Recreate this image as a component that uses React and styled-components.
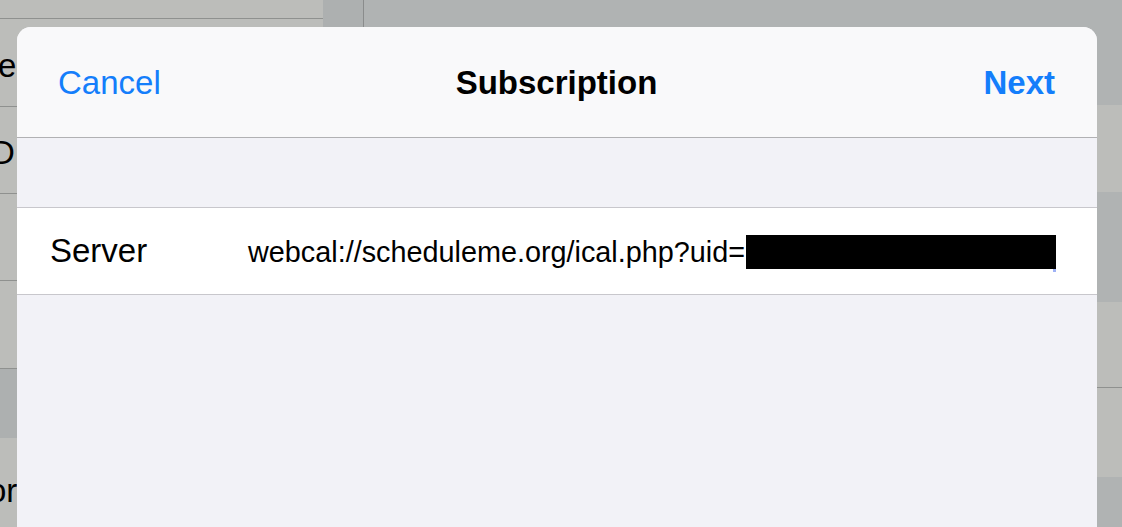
import React from "react";
import styled, { createGlobalStyle } from "styled-components";

const GlobalStyle = createGlobalStyle`
  html, body {
    margin: 0;
    padding: 0;
    background: #b0b3b3;
    font-family: "Liberation Sans", Arial, sans-serif;
    -webkit-font-smoothing: antialiased;
  }
`;

// rows of the dimmed list behind the sheet; only their tails show
const sidebarRows = [
  { height: 19, label: "" },
  { height: 88, label: "e", shift: -2 },
  { height: 87, label: "D", shift: -9 },
  { height: 87, label: "" },
  { height: 88, label: "" },
  { height: 69, label: "", selected: true },
  { height: 100, label: "or", shift: -12, last: true },
];

const detailCells = [
  { height: 105, cell: false },
  { height: 87, cell: true },
  { height: 110, cell: false },
  { height: 86, cell: true, line: true },
  { height: 89, cell: true },
  { height: 60, cell: false },
];

function App() {
  return (
    <>
      <GlobalStyle />
      <Screen>
        <Sidebar>
          {sidebarRows.map((row, i) => (
            <SideRow
              key={i}
              $height={row.height}
              $selected={row.selected}
              $last={row.last}
            >
              {row.label && <SideLabel $shift={row.shift}>{row.label}</SideLabel>}
            </SideRow>
          ))}
        </Sidebar>
        <Gutter />
        <Detail>
          {detailCells.map((c, i) => (
            <DetailCell key={i} $height={c.height} $cell={c.cell} $line={c.line} />
          ))}
        </Detail>

        <Sheet>
          <NavBar>
            <NavButton>Cancel</NavButton>
            <Title>Subscription</Title>
            <NavButton $bold>Next</NavButton>
          </NavBar>
          <GroupSpacer />
          <FieldRow>
            <FieldLabel>Server</FieldLabel>
            <FieldValue>
              webcal://scheduleme.org/ical.php?uid=
              <Redacted />
            </FieldValue>
          </FieldRow>
        </Sheet>
      </Screen>
    </>
  );
}

export default App;

const Screen = styled.div`
  position: relative;
  display: flex;
  width: 1122px;
  height: 527px;
  overflow: hidden;
  background: #b0b3b3;
`;

const Sidebar = styled.div`
  width: 323px;
  flex-shrink: 0;
  display: flex;
  flex-direction: column;
  background: #bcbdba;
  overflow: hidden;
`;

const SideRow = styled.div`
  height: ${(p) => p.$height}px;
  flex-shrink: 0;
  display: flex;
  align-items: center;
  background: ${(p) => (p.$selected ? "#adb0b0" : "transparent")};
  border-bottom: ${(p) => (p.$selected || p.$last ? "none" : "1px solid #8f918f")};
  box-sizing: border-box;
`;

const SideLabel = styled.span`
  margin-left: ${(p) => p.$shift || 0}px;
  padding-top: 6px;
  font-size: 33px;
  color: #000;
`;

const Gutter = styled.div`
  width: 40px;
  flex-shrink: 0;
  background: #adb0b0;
  border-right: 1px solid #8a8c8c;
`;

const Detail = styled.div`
  flex: 1;
  display: flex;
  flex-direction: column;
  background: #b0b3b3;
`;

const DetailCell = styled.div`
  height: ${(p) => p.$height}px;
  flex-shrink: 0;
  background: ${(p) => (p.$cell ? "#bcbdba" : "transparent")};
  border-bottom: ${(p) => (p.$line ? "1px solid #8f918f" : "none")};
  box-sizing: border-box;
`;

const Sheet = styled.div`
  position: absolute;
  left: 17px;
  top: 27px;
  width: 1080px;
  bottom: -20px;
  display: flex;
  flex-direction: column;
  background: #f2f2f7;
  border-radius: 14px 14px 0 0;
  overflow: hidden;
`;

const NavBar = styled.div`
  height: 110px;
  flex-shrink: 0;
  display: grid;
  grid-template-columns: 1fr auto 1fr;
  align-items: center;
  padding: 0 42px 0 41px;
  background: #f9f9fa;
  border-bottom: 1px solid #b1b1b3;
`;

const NavButton = styled.span`
  font-size: 33px;
  font-weight: ${(p) => (p.$bold ? 700 : 400)};
  color: #147efb;
  justify-self: ${(p) => (p.$bold ? "end" : "start")};
  padding-top: 2px;
`;

const Title = styled.span`
  font-size: 33px;
  font-weight: 700;
  color: #000;
  padding-top: 2px;
`;

const GroupSpacer = styled.div`
  height: 69px;
  flex-shrink: 0;
  border-bottom: 1px solid #c8c7cc;
`;

const FieldRow = styled.div`
  height: 86px;
  flex-shrink: 0;
  display: flex;
  align-items: center;
  padding-left: 33px;
  background: #fff;
  border-bottom: 1px solid #c8c7cc;
`;

const FieldLabel = styled.span`
  width: 198px;
  flex-shrink: 0;
  font-size: 33px;
  color: #000;
`;

const FieldValue = styled.span`
  display: flex;
  align-items: center;
  font-size: 28.8px;
  color: #000;
  white-space: nowrap;
  padding-top: 2px;
`;

const Redacted = styled.span`
  position: relative;
  display: inline-block;
  width: 310px;
  height: 34px;
  margin-left: 1px;
  background: #000;

  &::after {
    content: "";
    position: absolute;
    right: 0;
    bottom: -3px;
    width: 3px;
    height: 3px;
    background: #9fb2f6;
  }
`;
